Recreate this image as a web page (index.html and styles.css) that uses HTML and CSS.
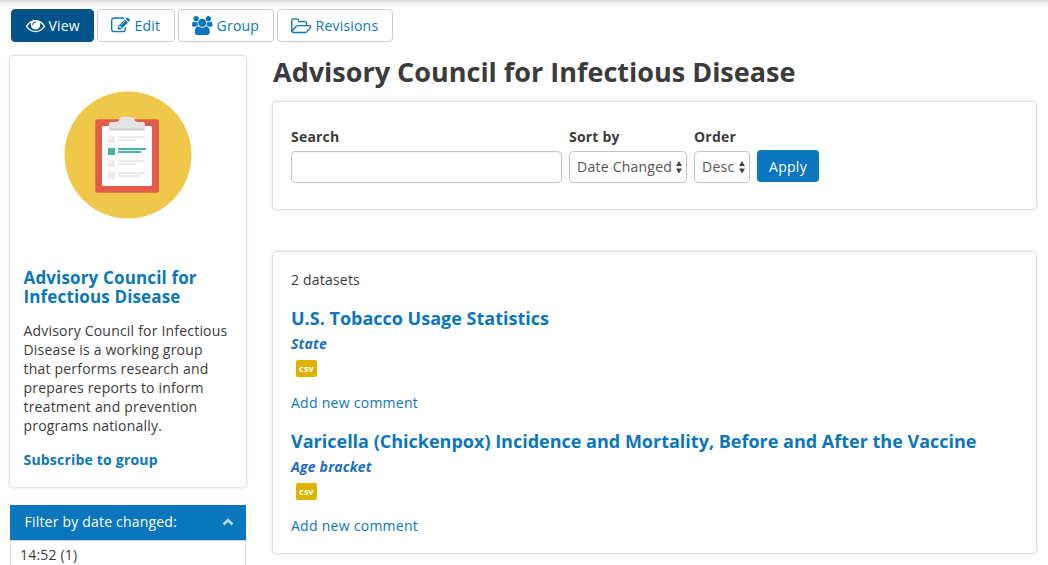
FILE: index.html
```html
<!DOCTYPE html>
<html lang="en">
<head>
<meta charset="utf-8">
<title>Advisory Council for Infectious Disease</title>
<link rel="stylesheet" href="styles.css">
</head>
<body>
<div class="page">
  <nav class="tabs">
    <a class="tab active"><svg class="icon" viewBox="0 0 1792 1792"><path d="M1664 960q-152-236-381-353 61 104 61 225 0 185-131.500 316.500t-316.500 131.500-316.500-131.500-131.500-316.500q0-121 61-225-229 117-381 353 133 205 333.500 326.500t434.500 121.500 434.500-121.500 333.500-326.500zm-720-384q0-20-14-34t-34-14q-125 0-214.500 89.500t-89.500 214.500q0 20 14 34t34 14 34-14 14-34q0-86 61-147t147-61q20 0 34-14t14-34zm848 384q0 34-20 69-140 230-376.500 368.500t-499.500 138.500-499.500-139-376.500-368q-20-35-20-69t20-69q140-229 376.500-368t499.500-139 499.500 139 376.500 368q20 35 20 69z"/></svg>View</a>
    <a class="tab"><svg class="icon" viewBox="0 0 1792 1792"><path d="M888 1184l116-116-152-152-116 116v56h96v96h56zm440-720q-16-16-33 1l-350 350q-17 17-1 33t33-1l350-350q17-17 1-33zm80 594v190q0 119-84.500 203.500t-203.500 84.500h-832q-119 0-203.500-84.500t-84.500-203.500v-832q0-119 84.500-203.500t203.500-84.500h832q63 0 117 25 15 7 18 23 3 17-9 29l-49 49q-14 14-32 8-23-6-45-6h-832q-66 0-113 47t-47 113v832q0 66 47 113t113 47h832q66 0 113-47t47-113v-126q0-13 9-22l64-64q15-15 35-7t20 29zm-96-738l288 288-672 672h-288v-288zm444 132l-92 92-288-288 92-92q28-28 68-28t68 28l152 152q28 28 28 68t-28 68z"/></svg>Edit</a>
    <a class="tab"><svg class="icon wide" viewBox="-64 0 1920 1792"><path d="M529 896q-162 5-265 128h-134q-82 0-138-40.500t-56-118.500q0-353 124-353 6 0 43.500 21t97.500 42.500 119 21.500q67 0 133-23-5 37-5 66 0 139 81 256zm1071 637q0 120-73 189.500t-194 69.500h-874q-121 0-194-69.500t-73-189.500q0-53 3.500-103.500t14-109 26.500-108.500 43-97.500 62-81 85.500-53.500 111.500-20q10 0 43 21.500t73 48 107 48 135 21.500 135-21.500 107-48 73-48 43-21.500q61 0 111.500 20t85.500 53.500 62 81 43 97.500 26.500 108.500 14 109 3.500 103.500zm-1024-1277q0 106-75 181t-181 75-181-75-75-181 75-181 181-75 181 75 75 181zm704 384q0 159-112.500 271.500t-271.500 112.500-271.500-112.500-112.500-271.500 112.500-271.500 271.500-112.500 271.500 112.500 112.500 271.500zm576 225q0 78-56 118.500t-138 40.500h-134q-103-123-265-128 81-117 81-256 0-29-5-66 66 23 133 23 59 0 119-21.500t97.500-42.500 43.500-21q124 0 124 353zm-128-609q0 106-75 181t-181 75-181-75-75-181 75-181 181-75 181 75 75 181z"/></svg>Group</a>
    <a class="tab"><svg class="icon wide" viewBox="0 0 1920 1792"><path d="M1781 1013q0-35-53-35h-1088q-40 0-85.500 21.500t-71.500 52.500l-294 363q-18 24-18 40 0 35 53 35h1088q40 0 86-22t71-53l294-363q18-22 18-39zm-1141-163h768v-160q0-40-28-68t-68-28h-576q-40 0-68-28t-28-68v-64q0-40-28-68t-68-28h-320q-40 0-68 28t-28 68v853l256-315q44-53 116-87.500t140-34.500zm1269 163q0 62-46 120l-295 363q-43 53-116 87.500t-140 34.500h-1088q-92 0-158-66t-66-158v-960q0-92 66-158t158-66h320q92 0 158 66t66 158v32h544q92 0 158 66t66 158v160h192q54 0 99 24.500t67 70.500q15 32 15 68z"/></svg>Revisions</a>
  </nav>
  <div class="columns">
    <aside class="sidebar">
      <section class="card group-card">
        <svg class="logo" viewBox="0 0 128 128">
          <circle cx="64" cy="64" r="63.500" fill="#efc84a"/>
          <rect x="31.300" y="28.300" width="63.700" height="73.500" rx="2.500" fill="#e15c4a"/>
          <rect x="38" y="35" width="50" height="60" rx="1.500" fill="#fff"/>
          <path d="M45 37.500v-4q0-2.500 2.500-2.500h5q2.500 0 3-2.500.5-2.500 3-2.500h9q2.500 0 3 2.500.5 2.500 3 2.500h5q2.500 0 2.500 2.500v4q0 2-2 2h-32q-2 0-2-2z" fill="#cbd0d0"/>
          <path d="M45 35.500v-2q0-2.500 2.500-2.500h5q2.500 0 3-2.500.5-2.500 3-2.500h9q2.500 0 3 2.500.5 2.500 3 2.500h5q2.500 0 2.500 2.500v2q0 2-2 2h-32q-2 0-2-2z" fill="#e1e5e6"/>
          <path d="M44 45h7v7h-7zM44 69h7v7h-7zM44 81h7v7h-7zM54 45h28v2h-28zM54 48h18v2h-18zM54 69h28v2h-28zM54 72h18v2h-18zM54 81h28v2h-28zM54 84h23v2h-23z" fill="#ebebeb"/>
          <path d="M44 57h7v7h-7zM54 57h28v2h-28zM54 60h23v2h-23z" fill="#45b29d"/>
        </svg>
        <h2 class="group-name">Advisory Council for Infectious Disease</h2>
        <p class="group-text">Advisory Council for Infectious Disease is a working group that performs research and prepares reports to inform treatment and prevention programs nationally.</p>
        <a class="subscribe">Subscribe to group</a>
      </section>
      <section class="filter">
        <h3 class="filter-head">Filter by date changed:<svg class="chevron" viewBox="0 0 12 8"><path d="M1.500 6.500L6 2l4.500 4.500"/></svg></h3>
        <div class="filter-body">14:52 (1)</div>
      </section>
    </aside>
    <main class="main">
      <h1 class="title">Advisory Council for Infectious Disease</h1>
      <form class="card search">
        <div class="field"><label class="label" for="q">Search</label><input class="control query" id="q" type="text"></div>
        <div class="field"><span class="label">Sort by</span><div class="control select sort">Date Changed<svg class="arrows" viewBox="0 0 6 12"><path d="M0 5L3 0l3 5zM0 7.500h6l-3 5z"/></svg></div></div>
        <div class="field"><span class="label">Order</span><div class="control select order">Desc<svg class="arrows" viewBox="0 0 6 12"><path d="M0 5L3 0l3 5zM0 7.500h6l-3 5z"/></svg></div></div>
        <button class="apply" type="button">Apply</button>
      </form>
      <section class="card results">
        <div class="count">2 datasets</div>
        <article class="dataset">
          <h2 class="dataset-title">U.S. Tobacco Usage Statistics</h2>
          <div class="topic">State</div>
          <span class="badge">csv</span>
          <a class="comment">Add new comment</a>
        </article>
        <article class="dataset">
          <h2 class="dataset-title">Varicella (Chickenpox) Incidence and Mortality, Before and After the Vaccine</h2>
          <div class="topic">Age bracket</div>
          <span class="badge">csv</span>
          <a class="comment">Add new comment</a>
        </article>
      </section>
    </main>
  </div>
</div>
</body>
</html>
```
FILE: styles.css
```css
* { box-sizing: border-box; }
body {
  margin: 0;
  height: 565px;
  overflow: hidden;
  background: #fff linear-gradient(#dcdcdc, #f4f4f4 4px, #fff 9px) no-repeat 0 0 / 100% 9px;
  color: #3b3b3b;
  font: 14px/19px "Open Sans", sans-serif;
  letter-spacing: .2px;
}
h1, h2, h3, p { margin: 0; }
.page { padding: 9px 12px 0 10px; }
.tabs { display: flex; gap: 3px; padding-left: 1px; height: 33px; }
.tab {
  display: flex;
  align-items: center;
  gap: 4px;
  padding: 0 13.500px;
  border: 1px solid #ccc;
  border-radius: 4px;
  background: #fff;
  color: #0a76bd;
  white-space: nowrap;
}
.tab.active { padding: 0 13px 0 13.500px; background: #00548a; border-color: #00548a; color: #fff; }
.icon { width: 19px; height: 19px; fill: currentColor; overflow: visible; }
.icon.wide { width: 20.500px; }
.columns { display: flex; gap: 27px; margin-top: 14px; }
.sidebar { width: 236px; flex: none; }
.main { flex: 1; min-width: 0; }
.card { background: #fff; border-radius: 3px; box-shadow: 0 0 3px rgba(0, 0, 0, .35); }
.group-card { height: 431px; padding: 35px 14px 0 13.500px; }
.logo { display: block; width: 128px; height: 128px; margin: 0 0 49px 40.500px; }
.group-name { font-size: 17px; line-height: 19px; letter-spacing: .15px; color: #0a76bd; }
.group-text { margin-top: 15px; }
.subscribe { display: block; margin-top: 15px; font-weight: 700; color: #0a76bd; }
.filter { margin-top: 18px; }
.filter-head {
  display: flex;
  justify-content: space-between;
  align-items: center;
  height: 35px;
  padding: 0 12px 2px 14.500px;
  background: #0a76bd;
  color: #fff;
  font-size: 14px;
  font-weight: 400;
}
.chevron { width: 12px; height: 8px; fill: none; stroke: #b9dcf2; stroke-width: 2.600; }
.filter-body { height: 40px; padding: 4px 9px; border: 1px solid #ddd; border-top-color: #ccc; }
.title { font-size: 27px; line-height: 32px; letter-spacing: 0; }
.search { display: flex; gap: 7px; height: 107px; margin-top: 14px; padding: 25px 18px 0; }
.label { display: block; height: 24px; font-weight: 700; }
.control {
  display: flex;
  align-items: center;
  height: 32px;
  border: 1px solid #c4c4c4;
  border-radius: 4px;
  background: #fff;
  color: #555;
}
.query { width: 271px; box-shadow: inset 0 1px 1px rgba(0, 0, 0, .06); }
.select { justify-content: space-between; padding: 0 4px 1px 7px; white-space: nowrap; }
.sort { width: 118px; letter-spacing: .24px; }
.order { width: 56px; letter-spacing: .3px; }
.arrows { width: 6px; height: 12px; fill: #444; overflow: visible; }
.apply {
  width: 62px;
  height: 32px;
  margin-top: 23px;
  padding: 0;
  border: 0;
  border-radius: 4px;
  background: #0a76bd;
  color: #fff;
  font: inherit;
  letter-spacing: .25px;
}
.results { height: 301px; margin-top: 43px; padding: 18px 18px 0; }
.dataset { display: flex; flex-direction: column; align-items: flex-start; height: 123px; }
.count { height: 38px; }
.dataset-title { font-size: 18px; line-height: 20px; letter-spacing: 0; color: #0a76bd; white-space: nowrap; }
.topic { margin-top: 6px; font-weight: 700; font-style: italic; color: #1c6cc0; }
.badge {
  width: 21px;
  height: 17px;
  margin: 7px 0 0 5px;
  border-radius: 2px;
  background: #dfb100;
  color: #fff;
  font-size: 9px;
  font-weight: 700;
  line-height: 17px;
  text-align: center;
}
.comment { margin-top: 16px; letter-spacing: .27px; color: #0a76bd; }
```
